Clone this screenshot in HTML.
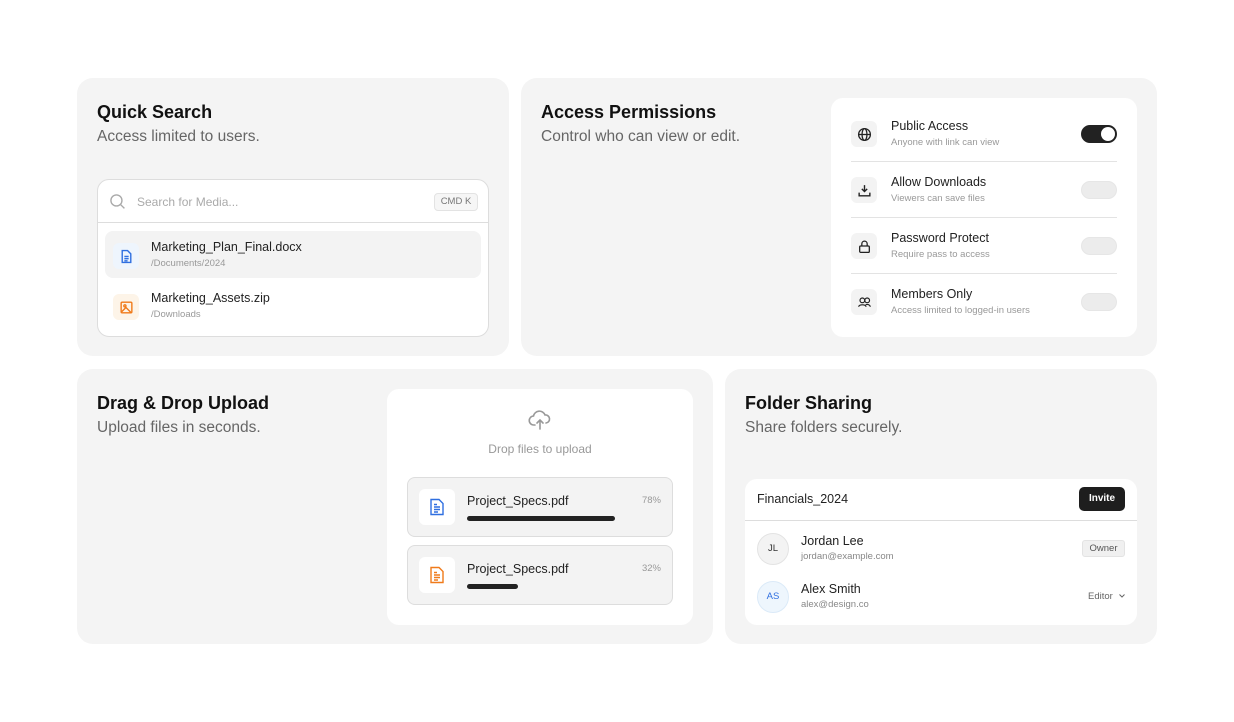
<!DOCTYPE html>
<html><head><meta charset="utf-8"><style>
*{box-sizing:border-box;margin:0;padding:0}
body{width:1234px;height:722px;background:#fff;font-family:"Liberation Sans",sans-serif;position:relative;overflow:hidden;color:#1a1a1a}
.a{position:absolute}
.card{position:absolute;background:#f4f4f4;border-radius:16px}
.t{position:absolute;font-size:18px;font-weight:bold;color:#111}
.s{position:absolute;font-size:15.5px;color:#666}
.w{position:absolute;background:#fff;border-radius:12px}
.nm{position:absolute;font-size:12.5px;color:#222;white-space:nowrap}
.sb{position:absolute;font-size:9.5px;color:#999;white-space:nowrap}
.ib{position:absolute;width:26px;height:26px;border-radius:6px;background:#f3f3f3;display:flex;align-items:center;justify-content:center}
.tg{position:absolute;left:250px;width:36px;height:18px;border-radius:9px;background:#ececec;border:1px solid #e6e6e6}
.sep{position:absolute;left:20px;width:266px;height:1px;background:#e3e3e3}
.up{position:absolute;left:20px;width:266px;height:60px;background:#f3f3f3;border:1px solid #ddd;border-radius:8px}
</style></head><body>

<div class="card" style="left:77px;top:78px;width:432px;height:278px"></div>
<div class="t" style="left:97px;top:102px">Quick Search</div>
<div class="s" style="left:97px;top:128px">Access limited to users.</div>
<div class="w" style="left:97px;top:179px;width:392px;height:158px;border:1px solid #ddd">
  <svg class="a" style="left:11px;top:13px" width="17" height="17" viewBox="0 0 16 16" fill="none" stroke="#aaa" stroke-width="1.3"><circle cx="7" cy="7" r="5.2"/><path d="M11 11l3.5 3.5"/></svg>
  <div class="a" style="left:39px;top:15px;font-size:12px;color:#aaa">Search for Media...</div>
  <div class="a" style="left:336px;top:13px;width:44px;height:18px;border:1px solid #e3e3e3;background:#f6f6f6;border-radius:4px;font-size:9.5px;color:#777;text-align:center;line-height:16px">CMD K</div>
  <div class="a" style="left:0;top:42px;width:390px;height:1px;background:#ddd"></div>
  <div class="a" style="left:7px;top:51px;width:376px;height:47px;background:#f3f3f3;border-radius:8px"></div>
  <div class="a" style="left:15px;top:63px;width:26px;height:26px;border-radius:6px;background:#eef5fd;display:flex;align-items:center;justify-content:center"><svg width="15" height="15" viewBox="0 0 14 14" fill="none" stroke="#2f6fe0" stroke-width="1.3"><path d="M3 1.5h5l3 3v8H3z"/><path d="M5 7h4M5 9h4M5 11h3"/></svg></div>
  <div class="nm" style="left:53px;top:60px">Marketing_Plan_Final.docx</div>
  <div class="sb" style="left:53px;top:78px;color:#999">/Documents/2024</div>
  <div class="a" style="left:15px;top:114px;width:26px;height:26px;border-radius:6px;background:#fdf4e8;display:flex;align-items:center;justify-content:center"><svg width="15" height="15" viewBox="0 0 14 14" fill="none" stroke="#f07a1a" stroke-width="1.3"><rect x="2" y="2" width="10" height="10" rx="1"/><circle cx="5.5" cy="5.5" r="1"/><path d="M2.5 11l4-4 5 5"/></svg></div>
  <div class="nm" style="left:53px;top:111px">Marketing_Assets.zip</div>
  <div class="sb" style="left:53px;top:129px">/Downloads</div>
</div>

<div class="card" style="left:521px;top:78px;width:636px;height:278px"></div>
<div class="t" style="left:541px;top:102px">Access Permissions</div>
<div class="s" style="left:541px;top:128px">Control who can view or edit.</div>
<div class="w" style="left:831px;top:98px;width:306px;height:239px">
  <div class="ib" style="left:20px;top:23px"><svg width="15" height="15" viewBox="0 0 14 14" fill="none" stroke="#222" stroke-width="1.2"><circle cx="7" cy="7" r="5.5"/><ellipse cx="7" cy="7" rx="2.3" ry="5.5"/><path d="M1.5 7h11"/></svg></div>
  <div class="nm" style="left:60px;top:21px">Public Access</div>
  <div class="sb" style="left:60px;top:39px">Anyone with link can view</div>
  <div class="tg" style="top:27px;background:#222;border-color:#222"><div class="a" style="left:19px;top:1px;width:14px;height:14px;border-radius:50%;background:#fff"></div></div>
  <div class="sep" style="top:63px"></div>
  <div class="ib" style="left:20px;top:79px"><svg width="15" height="15" viewBox="0 0 14 14" fill="none" stroke="#222" stroke-width="1.3"><path d="M7 2v6M4.5 5.5L7 8l2.5-2.5M2 9v3h10V9"/></svg></div>
  <div class="nm" style="left:60px;top:77px">Allow Downloads</div>
  <div class="sb" style="left:60px;top:95px">Viewers can save files</div>
  <div class="tg" style="top:83px"></div>
  <div class="sep" style="top:119px"></div>
  <div class="ib" style="left:20px;top:135px"><svg width="15" height="15" viewBox="0 0 14 14" fill="none" stroke="#222" stroke-width="1.2"><rect x="2.5" y="6.5" width="9" height="6" rx="1"/><path d="M4.5 6.5V4.5a2.5 2.5 0 015 0v2"/></svg></div>
  <div class="nm" style="left:60px;top:133px">Password Protect</div>
  <div class="sb" style="left:60px;top:151px">Require pass to access</div>
  <div class="tg" style="top:139px"></div>
  <div class="sep" style="top:175px"></div>
  <div class="ib" style="left:20px;top:191px"><svg width="15" height="15" viewBox="0 0 14 14" fill="none" stroke="#222" stroke-width="1.1"><circle cx="5" cy="5" r="2.2"/><circle cx="9.5" cy="5" r="2.2"/><path d="M1.5 11c.5-2.5 6.5-2.5 7 0M8 9c2-.5 4 0 4.5 2"/></svg></div>
  <div class="nm" style="left:60px;top:189px">Members Only</div>
  <div class="sb" style="left:60px;top:207px">Access limited to logged-in users</div>
  <div class="tg" style="top:195px"></div>
</div>

<div class="card" style="left:77px;top:369px;width:636px;height:275px"></div>
<div class="t" style="left:97px;top:393px">Drag &amp; Drop Upload</div>
<div class="s" style="left:97px;top:419px">Upload files in seconds.</div>
<div class="w" style="left:387px;top:389px;width:306px;height:236px">
  <svg class="a" style="left:141px;top:20px" width="24" height="22" viewBox="0 0 24 22" fill="none" stroke="#999" stroke-width="1.6" stroke-linecap="round"><path d="M7 16H6a4.5 4.5 0 01-.5-9A6 6 0 0117 6a4 4 0 011 8"/><path d="M12 20v-9M9 14l3-3 3 3"/></svg>
  <div class="a" style="left:0;width:306px;text-align:center;top:53px;font-size:12px;color:#999">Drop files to upload</div>
  <div class="up" style="top:88px">
    <div class="a" style="left:11px;top:11px;width:36px;height:36px;background:#fff;border-radius:6px;display:flex;align-items:center;justify-content:center"><svg width="16" height="18" viewBox="0 0 16 18" fill="none" stroke="#2f6fe0" stroke-width="1.4"><path d="M2 1.5h8l4 4v11H2z"/><path d="M5 9h6M5 11.5h6M5 14h4M5 6.5h3"/></svg></div>
    <div class="nm" style="left:59px;top:16px">Project_Specs.pdf</div>
    <div class="a" style="left:59px;top:38px;width:148px;height:5px;border-radius:3px;background:#222"></div>
    <div class="sb" style="right:11px;top:17px">78%</div>
  </div>
  <div class="up" style="top:156px">
    <div class="a" style="left:11px;top:11px;width:36px;height:36px;background:#fff;border-radius:6px;display:flex;align-items:center;justify-content:center"><svg width="16" height="18" viewBox="0 0 16 18" fill="none" stroke="#f07a1a" stroke-width="1.4"><path d="M2 1.5h8l4 4v11H2z"/><path d="M5 9h6M5 11.5h6M5 14h4M5 6.5h3"/></svg></div>
    <div class="nm" style="left:59px;top:16px">Project_Specs.pdf</div>
    <div class="a" style="left:59px;top:38px;width:51px;height:5px;border-radius:3px;background:#222"></div>
    <div class="sb" style="right:11px;top:17px">32%</div>
  </div>
</div>

<div class="card" style="left:725px;top:369px;width:432px;height:275px"></div>
<div class="t" style="left:745px;top:393px">Folder Sharing</div>
<div class="s" style="left:745px;top:419px">Share folders securely.</div>
<div class="w" style="left:745px;top:479px;width:392px;height:146px">
  <div class="nm" style="left:12px;top:13px;font-size:12.5px">Financials_2024</div>
  <div class="a" style="left:334px;top:8px;width:46px;height:24px;background:#1e1e1e;border-radius:5px;color:#fff;font-size:10px;font-weight:bold;text-align:center;line-height:24px">Invite</div>
  <div class="a" style="left:0;top:41px;width:392px;height:1px;background:#ddd"></div>
  <div class="a" style="left:12px;top:54px;width:32px;height:32px;border-radius:50%;background:#f3f3f3;border:1px solid #e3e3e3;font-size:9.5px;color:#333;text-align:center;line-height:30px">JL</div>
  <div class="nm" style="left:56px;top:55px">Jordan Lee</div>
  <div class="sb" style="left:56px;top:72px;color:#888">jordan@example.com</div>
  <div class="a" style="left:337px;top:61px;width:43px;height:17px;border-radius:3px;background:#f0f0f0;border:1px solid #e3e3e3;font-size:9.5px;color:#555;text-align:center;line-height:15px">Owner</div>
  <div class="a" style="left:12px;top:102px;width:32px;height:32px;border-radius:50%;background:#eef6fd;border:1px solid #dbeaf8;font-size:9.5px;color:#2f6fe0;text-align:center;line-height:30px">AS</div>
  <div class="nm" style="left:56px;top:103px">Alex Smith</div>
  <div class="sb" style="left:56px;top:120px;color:#888">alex@design.co</div>
  <div class="sb" style="left:343px;top:112px;color:#666">Editor</div>
  <svg class="a" style="left:374px;top:115px" width="6" height="4" viewBox="0 0 6 4" fill="none" stroke="#666" stroke-width="1"><path d="M.5.5L3 3 5.5.5"/></svg>
</div>
</body></html>
